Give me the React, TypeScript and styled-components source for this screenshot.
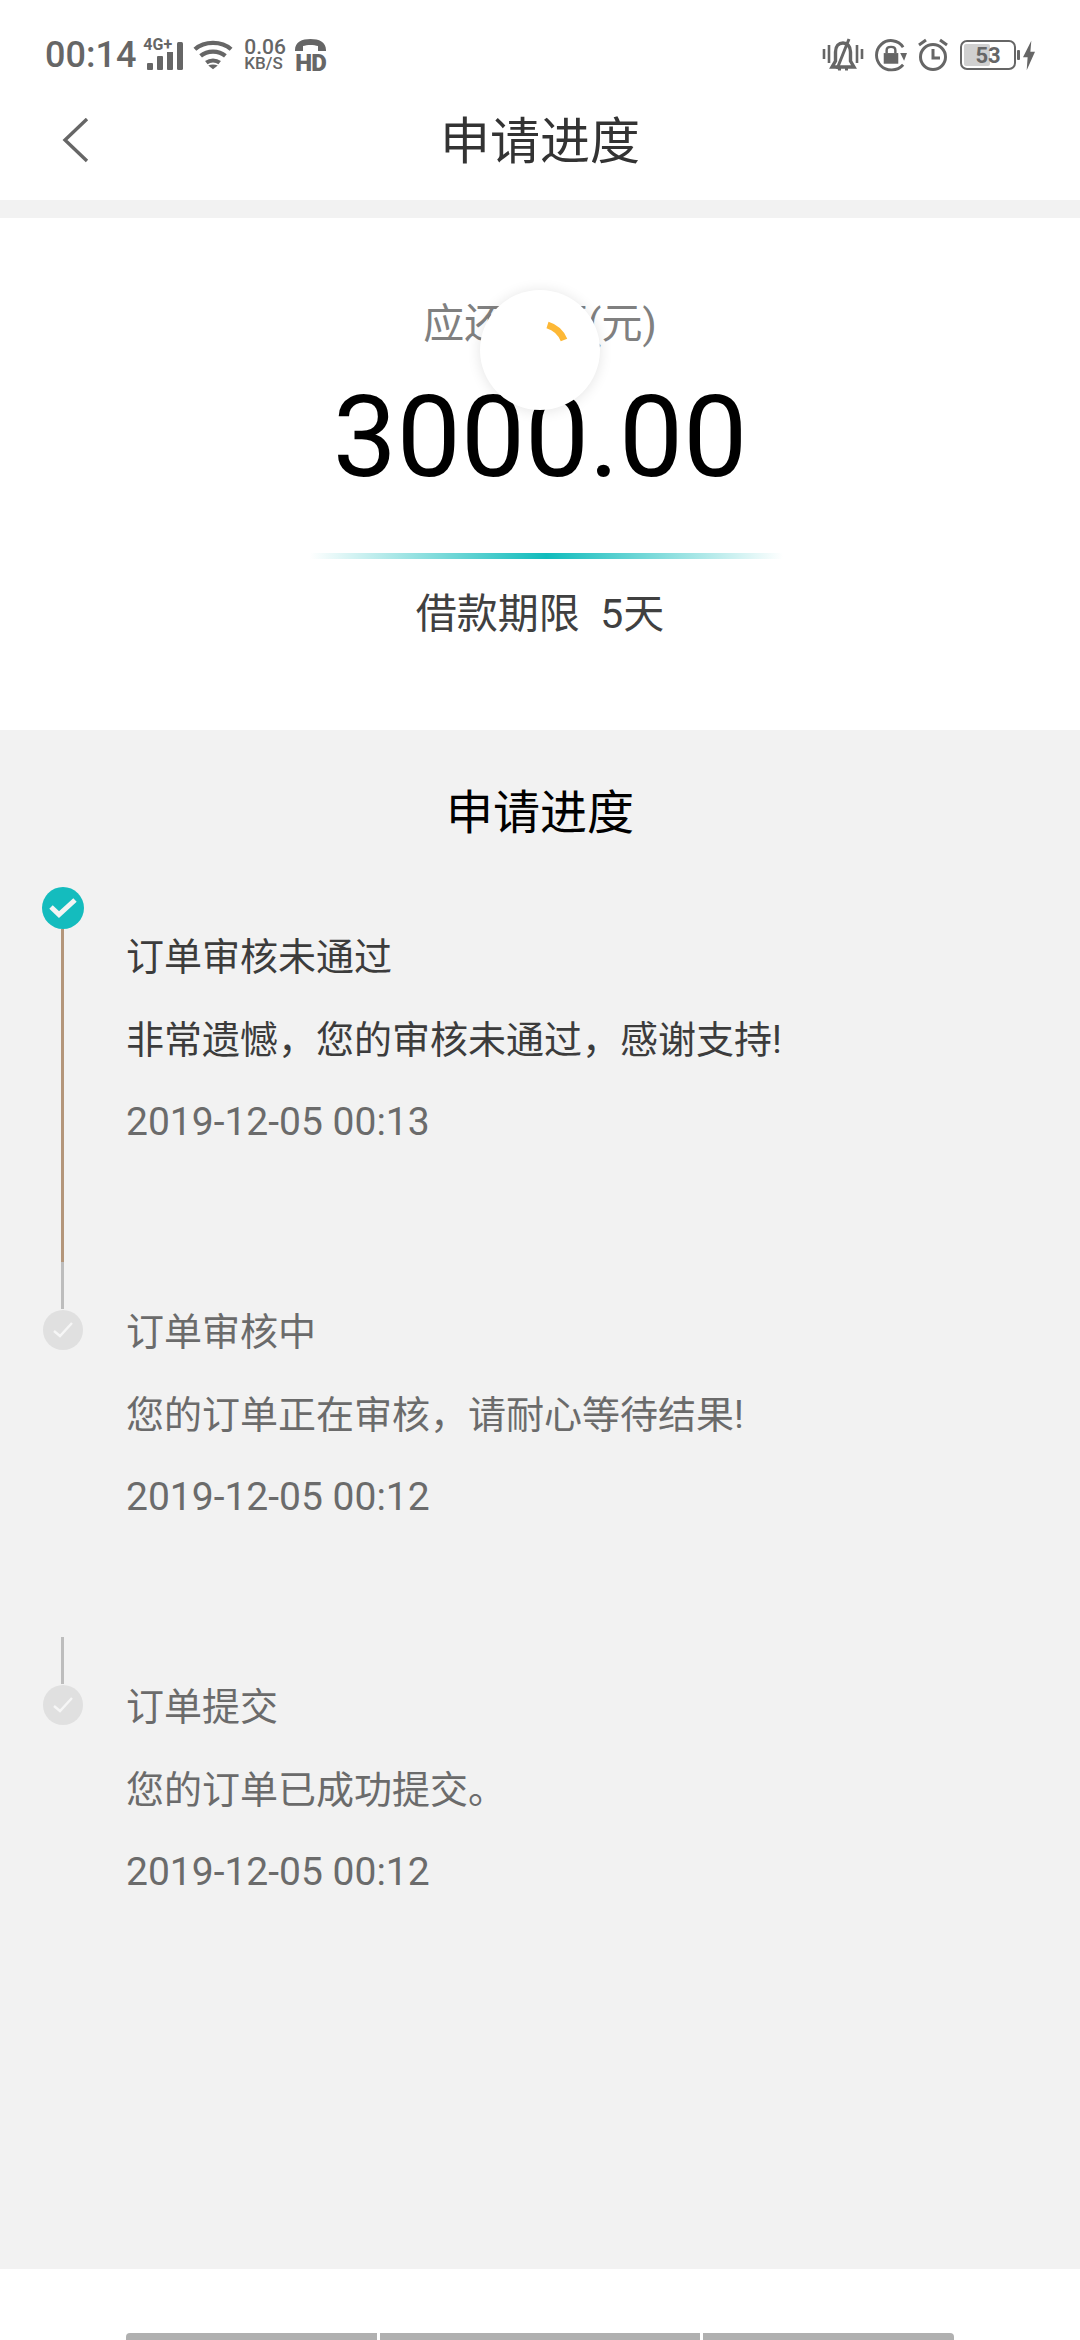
import React from 'react';
import styled, { createGlobalStyle } from 'styled-components';

const GlobalStyle = createGlobalStyle`
  html, body {
    margin: 0;
    padding: 0;
    background: #fff;
    font-family: Roboto, "Noto Sans CJK SC", sans-serif;
  }
  * {
    box-sizing: border-box;
  }
`;

const Page = styled.div`
  width: 1080px;
  height: 2340px;
  display: flex;
  flex-direction: column;
  overflow: hidden;
  background: #f2f2f2;
`;

const StatusBar = styled.div`
  height: 80px;
  flex: none;
  background: #fff;
  color: #666;
  padding: 38px 45px 0 45px;
  display: flex;
  justify-content: space-between;
  align-items: flex-start;
`;

const StatusGroup = styled.div`
  display: flex;
  align-items: center;
  height: 34px;
`;

const Clock = styled.span`
  font-size: 36px;
  line-height: 34px;
  font-weight: 500;
`;

const SignalBox = styled.div`
  position: relative;
  width: 38px;
  height: 32px;
  margin-left: 10px;
`;

const NetworkTag = styled.span`
  position: absolute;
  left: -3px;
  top: -1px;
  font-size: 16px;
  line-height: 14px;
  font-weight: 700;
  background: #fff;
  padding-right: 1px;
`;

const Speed = styled.div`
  display: flex;
  flex-direction: column;
  align-items: flex-start;
  margin-left: 11px;
  width: 41px;
  font-size: 21px;
  line-height: 16px;
  font-weight: 500;
`;

const SpeedUnit = styled.span`
  font-size: 17px;
  line-height: 16px;
`;

const HdBox = styled.div`
  position: relative;
  width: 31px;
  height: 32px;
  margin-left: 10px;
`;

const HdLabel = styled.span`
  position: absolute;
  left: 0;
  bottom: -1px;
  font-size: 24px;
  line-height: 18px;
  font-weight: 900;
  letter-spacing: -1px;
`;

const Battery = styled.div`
  position: relative;
  width: 56px;
  height: 30px;
  margin-left: 12px;
  border: 2px solid #666;
  border-radius: 7px;
  display: flex;
  align-items: center;
  justify-content: center;
  font-size: 22px;
  font-weight: 700;
`;

const BatteryFill = styled.div`
  position: absolute;
  left: 2px;
  top: 2px;
  bottom: 2px;
  border-radius: 2px;
  background: #d0d0d0;
`;

const BatteryLevel = styled.span`
  position: relative;
`;

const BatteryTip = styled.div`
  width: 3px;
  height: 10px;
  margin-left: 1px;
  background: #666;
  border-radius: 1px;
`;

const NavBar = styled.header`
  height: 120px;
  flex: none;
  background: #fff;
  display: grid;
  grid-template-columns: 1fr auto 1fr;
  align-items: center;
`;

const BackButton = styled.div`
  display: flex;
  padding-left: 60px;
  margin-top: -2px;
`;

const NavTitle = styled.h1`
  margin: 0;
  font-size: 50px;
  line-height: 124px;
  font-weight: 400;
  color: #333;
`;

const Summary = styled.section`
  position: relative;
  height: 512px;
  flex: none;
  margin-top: 18px;
  background: #fff;
  display: flex;
  flex-direction: column;
  align-items: center;
  padding-top: 78px;
`;

const AmountLabel = styled.div`
  font-size: 41px;
  line-height: 56px;
  color: #808080;
`;

const Amount = styled.div`
  font-size: 114px;
  line-height: 130px;
  margin-top: 20px;
  color: #000;
`;

const Divider = styled.div`
  width: 473px;
  height: 6px;
  margin: 51px 0 0 12px;
  background: linear-gradient(90deg, rgba(16, 188, 188, 0) 0%, #10bcbc 50%, rgba(16, 188, 188, 0) 100%);
`;

const Term = styled.div`
  margin-top: 27px;
  font-size: 41px;
  line-height: 56px;
  color: #404040;
  white-space: pre;
`;

const Spinner = styled.div`
  position: absolute;
  left: 480px;
  top: 72px;
  width: 120px;
  height: 120px;
  border-radius: 50%;
  background: #fff;
  box-shadow: 0 1px 14px rgba(0, 0, 0, 0.11);
`;

const Progress = styled.section`
  flex: 1;
  background: #f2f2f2;
`;

const ProgressTitle = styled.h2`
  margin: 0;
  padding-top: 55px;
  height: 157px;
  text-align: center;
  font-size: 47px;
  line-height: 56px;
  font-weight: 400;
  color: #000;
`;

const Step = styled.div`
  height: 375px;
  display: flex;
  padding-left: 42px;
`;

const Rail = styled.div`
  width: 42px;
  display: flex;
  flex-direction: column;
  align-items: center;
`;

const RailLine = styled.div<{ $done?: boolean }>`
  width: 3px;
  margin-left: -1px;
  flex: ${(p) => (p.$done ? 1 : 'none')};
  height: ${(p) => (p.$done ? 'auto' : '47px')};
  background: ${(p) => (p.$done ? '#b4967a' : '#bdbdbd')};
`;

const Dot = styled.div<{ $done?: boolean }>`
  flex: none;
  width: ${(p) => (p.$done ? 42 : 40)}px;
  height: ${(p) => (p.$done ? 42 : 40)}px;
  margin-top: ${(p) => (p.$done ? 0 : 1)}px;
  border-radius: 50%;
  background: ${(p) => (p.$done ? '#14bcbe' : '#e0e0e0')};
  display: flex;
  align-items: center;
  justify-content: center;
`;

const StepBody = styled.div<{ $done?: boolean }>`
  margin-left: 42px;
  padding-top: 43px;
  color: ${(p) => (p.$done ? '#3c3c3c' : '#6b6b6b')};
`;

const StepLine = styled.div`
  font-size: 38px;
  line-height: 54px;
  margin-bottom: 29px;
  white-space: nowrap;
`;

const StepDate = styled.div`
  font-size: 39px;
  line-height: 54px;
  margin-top: -1px;
  color: #6b6b6b;
`;

const Footer = styled.footer`
  height: 71px;
  flex: none;
  background: #fff;
  display: flex;
  align-items: flex-end;
  justify-content: center;
  gap: 3px;
`;

const GestureBar = styled.div<{ $w: number; $side?: 'left' | 'right' }>`
  width: ${(p) => p.$w}px;
  height: 7px;
  background: #b0b0b0;
  border-radius: ${(p) =>
    p.$side === 'left' ? '4px 0 0 0' : p.$side === 'right' ? '0 4px 0 0' : '0'};
`;

const SignalIcon = styled.svg`
  position: absolute;
  left: 0;
  top: 0;
`;

const SignalBars = () => (
  <SignalIcon width="38" height="32" viewBox="0 0 38 32" fill="#666">
    <rect x="1" y="24" width="6" height="7" rx="1" />
    <rect x="11" y="17" width="6" height="14" rx="1" />
    <rect x="21" y="10" width="6" height="21" rx="1" />
    <rect x="31" y="3" width="6" height="28" rx="1.5" />
  </SignalIcon>
);

const WifiIcon = () => (
  <svg width="40" height="32" viewBox="0 0 42 32" fill="none" stroke="#666" strokeWidth="4.4" style={{ marginLeft: 9 }}>
    <path d="M2 10 C12 1 30 1 40 10" />
    <path d="M8 17 C15 11 27 11 34 17" />
    <path d="M14 24 C18 21 24 21 28 24" />
    <path d="M21 31 L16 27 C19 25.5 23 25.5 26 27 Z" fill="#666" stroke="none" />
  </svg>
);

const HandsetIcon = () => (
  <svg width="31" height="14" viewBox="0 0 31 14" fill="#666" style={{ position: 'absolute', left: 0, top: 0 }}>
    <path d="M0 11 C0 3 7 0 15.5 0 C24 0 31 3 31 11 L31 12 L23 12 L23 7 C19 5.5 12 5.5 8 7 L8 12 L0 12 Z" />
  </svg>
);

const MuteBellIcon = () => (
  <svg width="42" height="34" viewBox="0 0 42 34" fill="none" stroke="#666" strokeWidth="3">
    <path d="M2 11 V21 M7 7 V25 M35 7 V25 M40 11 V21" strokeWidth="2.6" />
    <path d="M10 29 H32 L28.5 23 V14 C28.5 8 25 5 21 5 C17 5 13.5 8 13.5 14 V23 Z" strokeWidth="3.4" />
    <path d="M27 1 L15 31" strokeWidth="3" />
    <path d="M16 31 H19 M23 31 H26" strokeWidth="3" />
  </svg>
);

const RotationLockIcon = () => (
  <svg width="32" height="34" viewBox="0 0 33 34" style={{ marginLeft: 11 }}>
    <path d="M29 9 C24 1 13 0 6.5 6 C0 12 0 22 6 28 C12 34 23 34 29 27" fill="none" stroke="#666" strokeWidth="3" />
    <path d="M26 15 L33 15 L30 23 Z" fill="#666" />
    <rect x="9" y="15" width="15" height="11" fill="#666" />
    <path d="M12 15 V12 C12 7.5 21 7.5 21 12 V15" fill="none" stroke="#666" strokeWidth="2.5" />
  </svg>
);

const AlarmIcon = () => (
  <svg width="30" height="34" viewBox="0 0 30 34" fill="none" stroke="#666" style={{ marginLeft: 11 }}>
    <circle cx="15" cy="19" r="12.5" strokeWidth="3" />
    <path d="M15 11 V20 H22" strokeWidth="3" />
    <path d="M1 7 L8 2 M29 7 L22 2" strokeWidth="3" />
  </svg>
);

const BoltIcon = () => (
  <svg width="12" height="31" viewBox="0 0 13 32" fill="#666" style={{ marginLeft: 3 }}>
    <path d="M9 0 L0 18 H5 L4 32 L13 12 H8 Z" />
  </svg>
);

const CheckMark = ({ done }: { done?: boolean }) =>
  done ? (
    <svg width="30" height="24" viewBox="0 0 30 24" fill="none" stroke="#f4f4f4" strokeWidth="5">
      <path d="M3 11 L11 18.5 L27 4" />
    </svg>
  ) : (
    <svg width="22" height="18" viewBox="0 0 22 18" fill="none" stroke="#f6f6f6" strokeWidth="2.4">
      <path d="M2 10 L8 15 L20 2" />
    </svg>
  );

const steps = [
  {
    title: '订单审核未通过',
    text: '非常遗憾，您的审核未通过，感谢支持!',
    date: '2019-12-05 00:13',
    done: true,
  },
  {
    title: '订单审核中',
    text: '您的订单正在审核，请耐心等待结果!',
    date: '2019-12-05 00:12',
    done: false,
  },
  {
    title: '订单提交',
    text: '您的订单已成功提交。',
    date: '2019-12-05 00:12',
    done: false,
  },
];

const App: React.FC = () => {
  return (
    <Page>
      <GlobalStyle />
      <StatusBar>
        <StatusGroup>
          <Clock>00:14</Clock>
          <SignalBox>
            <SignalBars />
            <NetworkTag>4G+</NetworkTag>
          </SignalBox>
          <WifiIcon />
          <Speed>
            0.06
            <SpeedUnit>KB/S</SpeedUnit>
          </Speed>
          <HdBox>
            <HandsetIcon />
            <HdLabel>HD</HdLabel>
          </HdBox>
        </StatusGroup>
        <StatusGroup>
          <MuteBellIcon />
          <RotationLockIcon />
          <AlarmIcon />
          <Battery>
            <BatteryFill style={{ width: `${53 * 0.94}%` }} />
            <BatteryLevel>53</BatteryLevel>
          </Battery>
          <BatteryTip />
          <BoltIcon />
        </StatusGroup>
      </StatusBar>
      <NavBar>
        <BackButton>
          <svg width="30" height="46" viewBox="0 0 30 46" fill="none" stroke="#666" strokeWidth="3.4">
            <path d="M27 1 L5 22 L27 43" />
          </svg>
        </BackButton>
        <NavTitle>申请进度</NavTitle>
      </NavBar>
      <Summary>
        <AmountLabel>应还金额(元)</AmountLabel>
        <Amount>3000.00</Amount>
        <Divider />
        <Term>借款期限  5天</Term>
        <Spinner>
          <svg width="120" height="120" viewBox="0 0 120 120" fill="none" stroke="#fdb836" strokeWidth="7">
            <path d="M67.5 35 A26 26 0 0 1 84 50" />
          </svg>
        </Spinner>
      </Summary>
      <Progress>
        <ProgressTitle>申请进度</ProgressTitle>
        {steps.map((step) => (
          <Step key={step.title}>
            <Rail>
              {!step.done && <RailLine />}
              <Dot $done={step.done}>
                <CheckMark done={step.done} />
              </Dot>
              {step.done && <RailLine $done />}
            </Rail>
            <StepBody $done={step.done}>
              <StepLine>{step.title}</StepLine>
              <StepLine>{step.text}</StepLine>
              <StepDate>{step.date}</StepDate>
            </StepBody>
          </Step>
        ))}
      </Progress>
      <Footer>
        <GestureBar $w={251} $side="left" />
        <GestureBar $w={320} />
        <GestureBar $w={251} $side="right" />
      </Footer>
    </Page>
  );
};

export default App;
